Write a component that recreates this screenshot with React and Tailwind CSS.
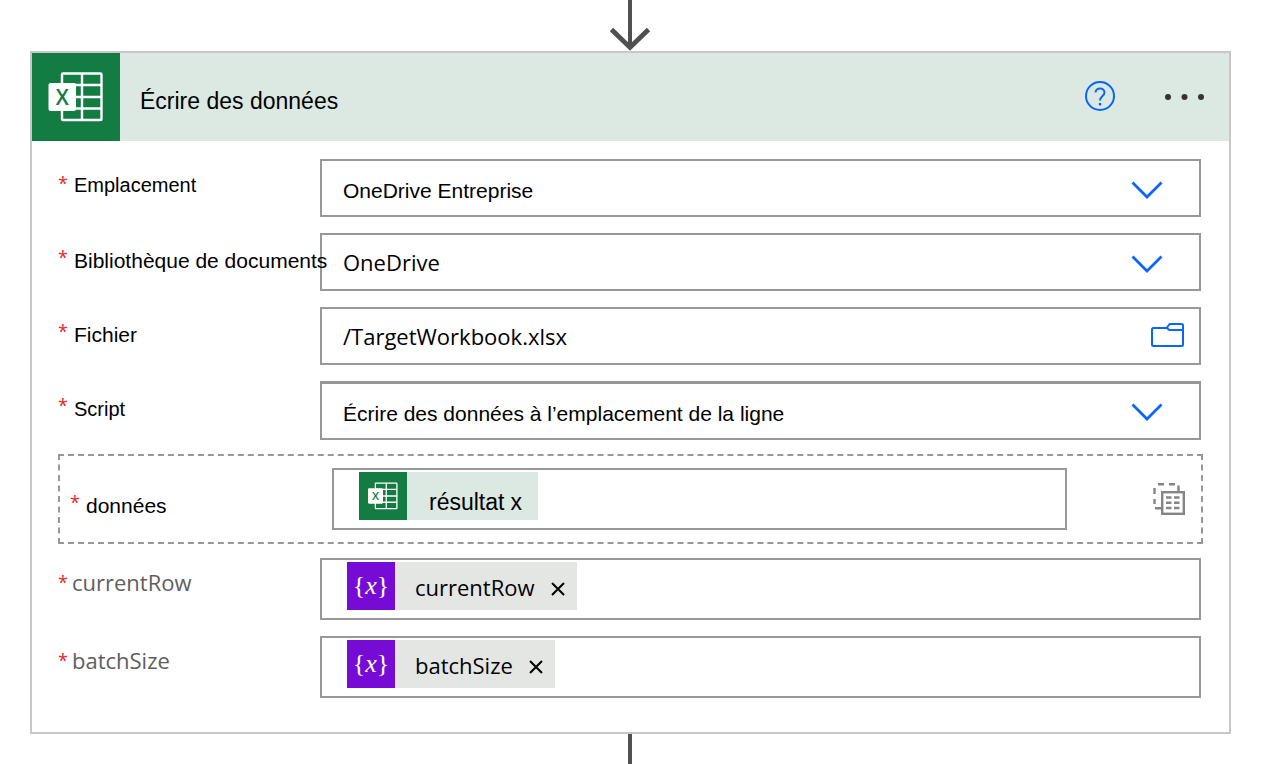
import clsx from "clsx";

const ARIAL = "font-['Liberation_Sans',Arial,sans-serif]";
const SEGOE = "font-['Open_Sans','Segoe_UI',sans-serif]";

function ExcelIcon({ className }) {
  return <svg viewBox="0 0 88 88" className={className} aria-hidden="true">
    <rect width="88" height="88" fill="#127c42" />
    <g fill="none" stroke="#fff" strokeWidth="2.4">
      <rect x="30" y="20.5" width="39.5" height="46.5" rx="1" />
      <path d="M50 20.5v46.5M30 32h39.500M30 44h39.500M30 55.500h39.500" />
    </g>
    <rect x="16.500" y="30" width="27.500" height="28" rx="2" fill="#fff" />
    <text x="30.200" y="51.500" textAnchor="middle" fontSize="21" fontWeight="600" fill="#127c42" className="font-['Open_Sans',sans-serif]">X</text>
  </svg>;
}

function Chevron() {
  return <svg viewBox="0 0 32 18" className="pointer-events-none absolute right-[38px] top-[22px] h-[18px] w-8" aria-hidden="true">
    <path d="M1.500 1.500L16 16 30.500 1.500" fill="none" stroke="#0a64ff" strokeWidth="2.800" />
  </svg>;
}

function FolderIcon() {
  return <svg viewBox="0 0 34 26" className="h-[26px] w-[34px]" fill="none" stroke="#0a64ff" strokeWidth="2" aria-hidden="true">
    <path d="M17 6H3.500Q2 6 2 7.500V22.500Q2 24 3.500 24H31.500Q33 24 33 22.500V3.500Q33 2 31.500 2H20.500Q19.500 2 18.800 3L17 5.500L18.500 7.500Q19 8 20 8H33" />
  </svg>;
}

function ArrayIcon() {
  return <svg viewBox="0 0 32 32" className="h-8 w-8" fill="none" stroke="#858585" aria-hidden="true">
    <path d="M5 1.200h6M16 1.200h6M25.500 2.500v6M1.500 5v6M1.500 16v5M2 25.200h6" strokeWidth="2.400" />
    <rect x="9.200" y="9.200" width="21.600" height="21.600" strokeWidth="2.400" />
    <path d="M13 14.500h5.500M21 14.500h5.500M13 19.800h5.500M21 19.800h5.500M13 25h5.500M21 25h5.500" strokeWidth="2.400" />
  </svg>;
}

function Label({ id, text, className }) {
  return <label htmlFor={id} className="relative z-10 flex w-[262px] shrink-0 gap-[7px] whitespace-nowrap pt-2.5">
    <span className={clsx(SEGOE, "w-[9px] text-[18px] leading-7 text-[#e8262b]")}>*</span>
    <span className={clsx("leading-7", className)}>{text}</span>
  </label>;
}

function SelectRow({ id, label, labelClass, value, valueClass, boxClass }) {
  return <div className="flex pr-0.5">
    <Label id={id} text={label} className={labelClass} />
    <div className="relative min-w-0 flex-1">
      <select
        id={id}
        defaultValue={value}
        className={clsx("block w-full appearance-none border-2 border-[#989898] bg-white pl-[21px] text-black", boxClass || "h-[58px]", valueClass)}
      >
        <option>{value}</option>
      </select>
      <Chevron />
    </div>
  </div>;
}

function VariableRow({ id, name }) {
  return <div className="flex pr-0.5">
    <Label id={id} text={name} className={clsx(SEGOE, "-ml-0.5 text-[22px] text-[#605e5c]")} />
    <div id={id} className="h-[62px] flex-1 border-2 border-[#989898] pl-[25px] pt-0.5">
      <div className="inline-flex h-12 items-center bg-[#e4e6e4] pr-3">
        <span className="flex h-12 w-12 items-center justify-center bg-[#770bd6] font-['Liberation_Serif',serif] text-[26px] leading-none text-white">
          {"{"}<i>x</i>{"}"}
        </span>
        <span className={clsx(SEGOE, "pl-5 pt-0.5 text-[22px] leading-7 text-black")}>{name}</span>
        <button type="button" aria-label={`Remove ${name}`} className="ml-4 mt-1.5">
          <svg viewBox="0 0 14 14" className="h-3.5 w-3.5" aria-hidden="true">
            <path d="M1 1l12 12M13 1L1 13" stroke="#000" strokeWidth="2" />
          </svg>
        </button>
      </div>
    </div>
  </div>;
}

export default function App() {
  return <main className="flex flex-col items-center overflow-hidden bg-white pl-[30px] pr-[35px]">
    <svg viewBox="0 0 42 51" className="mr-px h-[51px] w-[42px]" fill="none" stroke="#505050" aria-hidden="true">
      <path d="M21 0v48" strokeWidth="4" />
      <path d="M2.500 29.500L21 47.500 39.500 29.500" strokeWidth="4.800" />
    </svg>

    <section className="w-full border-2 border-[#c8c8c8]">
      <header className="flex h-[88px] items-center bg-[#dbe9e2] pr-[23px]">
        <ExcelIcon className="h-[88px] w-[88px]" />
        <h1 className={clsx(ARIAL, "flex-1 pl-5 pt-2 text-[23px] leading-7 text-black")}>Écrire des données</h1>
        <button type="button" aria-label="Help" className="mr-12">
          <svg viewBox="0 0 32 32" className="h-8 w-8" fill="none" stroke="#0a64ff" strokeWidth="2" aria-hidden="true">
            <circle cx="16" cy="15" r="14" />
            <path d="M11.500 11.500C11.500 6 20.500 6 20.500 11.500C20.500 15 16 15 16 19.500" />
            <path d="M16 22v2.500" strokeWidth="2.400" />
          </svg>
        </button>
        <button type="button" aria-label="More">
          <svg viewBox="0 0 42 8" className="h-2 w-[42px]" fill="#333" aria-hidden="true">
            <circle cx="4" cy="4" r="3" />
            <circle cx="20.500" cy="4" r="3" />
            <circle cx="37" cy="4" r="3" />
          </svg>
        </button>
      </header>

      <form className="px-[26px] pb-[34px] pt-[18px]">
        <div className="flex flex-col gap-4">
          <SelectRow
            id="location"
            label="Emplacement"
            labelClass={clsx(ARIAL, "pt-0.5 text-[20px]")}
            value="OneDrive Entreprise"
            valueClass={clsx(ARIAL, "pt-1.5 text-[21px]")}
          />
          <SelectRow
            id="library"
            label="Bibliothèque de documents"
            labelClass={clsx(ARIAL, "pt-1 text-[21px]")}
            value="OneDrive"
            valueClass={clsx(SEGOE, "text-[22px]")}
          />
          <div className="flex pr-0.5">
            <Label id="file" text="Fichier" className={clsx(ARIAL, "pt-1 text-[21px]")} />
            <div className="relative min-w-0 flex-1">
              <input
                id="file"
                type="text"
                defaultValue="/TargetWorkbook.xlsx"
                className={clsx(SEGOE, "block h-[58px] w-full border-2 border-[#989898] pl-[21px] pr-16 text-[22px] text-black")}
              />
              <button type="button" aria-label="Browse" className="absolute right-[17px] top-[15px]">
                <FolderIcon />
              </button>
            </div>
          </div>
          <SelectRow
            id="script"
            label="Script"
            labelClass={clsx(ARIAL, "pt-1 text-[20px]")}
            value="Écrire des données à l’emplacement de la ligne"
            valueClass={clsx(ARIAL, "pt-1.5 text-[21px]")}
            boxClass="h-[59px] border-t-[3px]"
          />
        </div>

        <div className="my-3.5 flex items-center border-2 border-dashed border-[#989898] py-3 pl-2.5 pr-4">
          <Label id="data" text="données" className={clsx(ARIAL, "pt-1 text-[21px]")} />
          <div id="data" className="h-[62px] flex-1 border-2 border-[#989898] pl-[25px] pt-0.5">
            <div className="inline-flex h-12 items-center bg-[#dbe9e2] pr-4">
              <ExcelIcon className="h-12 w-12" />
              <span className={clsx(ARIAL, "pl-[22px] pt-3 text-[23px] leading-7 text-black")}>résultat</span>
              <button type="button" aria-label="Remove résultat" className={clsx(ARIAL, "ml-1.5 pt-3 text-[23px] leading-7 text-black")}>x</button>
            </div>
          </div>
          <button type="button" aria-label="Switch to entire array" className="ml-[86px]">
            <ArrayIcon />
          </button>
        </div>

        <div className="flex flex-col gap-4">
          <VariableRow id="current-row" name="currentRow" />
          <VariableRow id="batch-size" name="batchSize" />
        </div>
      </form>
    </section>

    <div className="mr-px h-[30px] w-1 bg-[#505050]" />
  </main>;
}
